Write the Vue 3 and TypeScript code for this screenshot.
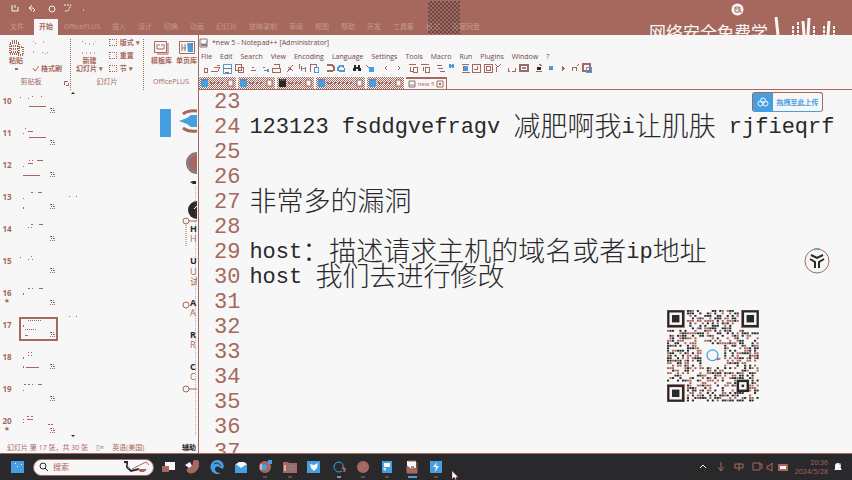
<script setup lang="ts">
interface Segment { text: string; cjk?: boolean }
interface EditorLine { no: number; segs: Segment[] }
interface Shape { d: string; f?: string; s?: string; w?: number }

const RED = '#a6685c'
const BLUE = '#459fe0'
const DARK = '#29292b'
const PALE = '#f7f7f7'

const ribbonTabs = ['文件', '开始', 'OfficePLUS', '插入', '设计', '切换', '动画', '幻灯片', '放映录制', '审阅', '视图', '帮助', '开发', '工具集', '格式', '百度网盘']
const menus = ['File', 'Edit', 'Search', 'View', 'Encoding', 'Language', 'Settings', 'Tools', 'Macro', 'Run', 'Plugins', 'Window', '?']

const content: Record<number, string> = {
  24: '123123 fsddgvefragv 减肥啊我i让肌肤 rjfieqrf',
  27: '非常多的漏洞',
  29: 'host：描述请求主机的域名或者ip地址',
  30: 'host 我们去进行修改',
}
const split = (s: string): Segment[] =>
  (s.match(/[\u3000-\uffff]+|[^\u3000-\uffff]+/g) ?? []).map(text => ({ text, cjk: text.charCodeAt(0) >= 0x3000 }))
const lines: EditorLine[] = Array.from({ length: 15 }, (_, i) => ({ no: 23 + i, segs: split(content[23 + i] ?? '') }))

const slides = [
  { no: 10, d: 'M1 11h1v1h-1zM9 12h1v1h-1zM13 10h1v1h-1zM22 10h1v1h-1z', bar: 'M10 20h17v1h-17z' },
  { no: 11, d: 'M6 10h1v1h-1zM9 13h5v1h-5zM4 15h1v1h-1z', bar: 'M10 19h17v1h-17z' },
  { no: 12, d: 'M10 10h1v1h-1zM13 10h1v1h-1zM18 10h6v1h-6zM4 16h1v1h-1zM9 13h5v1h-5z', bar: 'M4 25h17v1h-17z' },
  { no: 13, d: 'M12 10h2v1h-2zM19 10h4v1h-4zM4 16h1v1h-1zM4 25h1v2h-1z', bar: '' },
  { no: 14, d: 'M12 10h2v1h-2zM20 10h4v1h-4zM9 13h1v1h-1zM12 13h1v1h-1z', bar: '' },
  { no: 15, d: 'M1 11h1v1h-1zM12 10h1v1h-1zM9 13h1v1h-1zM13 13h1v1h-1z', bar: '' },
  { no: 16, d: 'M9 10h2v1h-2zM13 10h1v1h-1zM20 10h4v1h-4zM4 15h1v2h-1z', bar: '', star: true },
  { no: 17, d: 'M9 10h1v1h-1zM11 10h1v1h-1zM13 10h1v1h-1zM15 10h1v1h-1zM17 10h1v1h-1zM19 10h1v1h-1zM21 10h1v1h-1zM4 15h1v2h-1zM6 19h1v1h-1zM8 19h1v1h-1zM10 19h1v1h-1zM12 19h1v1h-1zM14 19h1v1h-1zM16 19h1v1h-1zM6 25h3v1h-3z', bar: '', active: true },
  { no: 18, d: 'M9 10h1v1h-1zM12 10h1v1h-1zM9 13h1v1h-1zM12 13h1v1h-1zM4 15h1v2h-1zM4 24h1v2h-1z', bar: 'M7 25h13v1h-13z' },
  { no: 19, d: 'M5 10h2v1h-2zM9 10h2v1h-2zM13 10h1v1h-1zM19 10h4v1h-4zM4 16h1v1h-1z', bar: '' },
  { no: 20, d: 'M8 10h2v1h-2zM12 10h2v1h-2zM8 13h6v1h-6zM4 13h1v1h-1zM4 16h1v1h-1zM29 18h2v1h-2zM32 18h2v1h-2z', bar: '', star: true },
]

const toolIcons: { at: number; shapes: Shape[] }[] = [
  { at: 205, shapes: [{ d: 'M4 5h3v4h-3z', s: RED }] },
  { at: 215, shapes: [{ d: 'M1 8h7l2-4h-6M7 2h3', s: RED }] },
  { at: 227, shapes: [{ d: 'M1 1h8v9h-8z', s: BLUE }, { d: 'M1 5h8M3 9h4', s: RED }] },
  { at: 239, shapes: [{ d: 'M1 1h6v6h-6zM4 4h5v5h-5z', s: RED }] },
  { at: 253, shapes: [{ d: 'M4 4h2M3 7h5', s: RED }] },
  { at: 265, shapes: [{ d: 'M3 4h2M4 7h4', s: RED }, { d: 'M7 6h2v3h-2z', f: BLUE }] },
  { at: 276, shapes: [{ d: 'M1 5h8v4h-8zM3 1h5v4', s: RED }] },
  { at: 290, shapes: [{ d: 'M2 9l6-7M3 4l5 4', s: RED }] },
  { at: 302, shapes: [{ d: 'M2 1v5M4 3v5M8 4v5', s: RED }, { d: 'M5 5h3', s: BLUE }] },
  { at: 314, shapes: [{ d: 'M1 9v-8h6v3', s: RED }, { d: 'M5 4h4v5h-4z', s: BLUE }] },
  { at: 330, shapes: [{ d: 'M2 2h5l2 2v3l-2 1h-5', s: RED, w: 2 }] },
  { at: 341, shapes: [{ d: 'M8 3h-4l-2 2v2l2 1h5', s: BLUE, w: 2 }, { d: 'M7 3l2 4', s: RED }] },
  { at: 357, shapes: [{ d: 'M2 2h2v2h2v-2h2l1 6h-3v-2h-2v2h-3z', f: DARK }] },
  { at: 370, shapes: [{ d: 'M1 2l3 3', s: RED }, { d: 'M4 4h5v5h-5z', f: BLUE }] },
  { at: 386, shapes: [{ d: 'M6 3l-2 2 2 2', s: RED }] },
  { at: 399, shapes: [{ d: 'M4 3l2 2-2 2', s: RED }] },
  { at: 413, shapes: [{ d: 'M1 1h7M2 4v4h3M5 4h4v5h-4z', s: RED }] },
  { at: 425, shapes: [{ d: 'M1 1h8M3 4v4M5 4h4v5h-4z', s: RED }] },
  { at: 440, shapes: [{ d: 'M2 2h5M3 5h5M5 8h5', s: RED }] },
  { at: 452, shapes: [{ d: 'M3 1v4M6 5v-4M4 3h2', s: BLUE, w: 2 }] },
  { at: 465, shapes: [{ d: 'M2 1h7M3 3v5M2 9h8', s: RED }, { d: 'M4 3h4v5h-4z', f: BLUE }] },
  { at: 476, shapes: [{ d: 'M1 1h8v8h-8zM3 6h3v-3', s: RED }] },
  { at: 488, shapes: [{ d: 'M1 1h8v8h-8zM3 3h4v4h-4z', s: RED }] },
  { at: 498, shapes: [{ d: 'M2 1l3 3 3-3M3 9v-5', s: RED }] },
  { at: 512, shapes: [{ d: 'M1 5v3h2M5 8h3v-3', s: RED }] },
  { at: 524, shapes: [{ d: 'M1 2h8v6h-8z', s: RED, w: 2 }, { d: 'M3 4h4v2h-4z', f: BLUE }] },
  { at: 539, shapes: [{ d: 'M3 4h4v3h-4z', f: DARK }, { d: 'M5 1l3 2M2 8h6', s: RED }] },
  { at: 551, shapes: [{ d: 'M3 3h4v3h-4z', f: BLUE }, { d: 'M3 6h4', s: RED }] },
  { at: 563, shapes: [{ d: 'M4 3l3 2-3 3z', f: RED }] },
  { at: 575, shapes: [{ d: 'M2 8v-4h4v4M7 3l2-2', s: RED }] },
  { at: 587, shapes: [{ d: 'M1 1h7v7h-7z', s: RED, w: 2 }, { d: 'M4 4h5v5h-5z', s: BLUE }] },
]

const docTabs = [
  { c: BLUE, w: 'mid' }, { c: BLUE, w: 'mid' }, { c: DARK, w: 'mid' }, { c: BLUE, w: 'wide' }, { c: BLUE, w: 'mid' },
]

const apps: { name: string; dash?: string; shapes: Shape[] }[] = [
  { name: 'Task view', shapes: [{ d: 'M4 2h10v8h-10z', f: PALE }, { d: 'M1 6h7v6h-7z', f: RED }] },
  { name: 'Copilot', shapes: [{ d: 'M8 1c4-4 7 0 6 5s-6 9-10 7c-3-1-3-4-1-5 3 0 5-2 5-7z', f: RED }, { d: 'M0 5l5-3 2 4-3 2z', f: PALE }] },
  { name: 'Edge', shapes: [{ d: 'M7 0a7 7 0 1 0 4 13c-3 0-6-1-6-4 0-2 2-3 4-2l4 2c2-5-1-9-6-9z', f: BLUE }, { d: 'M4 4c3-2 6 0 7 2', s: DARK }] },
  { name: 'Mail', shapes: [{ d: 'M1 4h12v9h-12z', f: BLUE }, { d: 'M2 4l3-2h5l3 2-6 4z', f: PALE }] },
  { name: 'Chrome', dash: RED, shapes: [{ d: 'M7 1a6 6 0 1 0 .1 0z', f: RED }, { d: 'M6 4a3 3 0 1 0 .1 0z', f: BLUE }, { d: 'M10 0h4v4h-4z', f: BLUE }, { d: 'M3 4v6', s: PALE }] },
  { name: 'Explorer', dash: RED, shapes: [{ d: 'M0 2h5l1 1h8v10h-14z', f: RED }, { d: 'M2 5v6', s: PALE }, { d: 'M6 6h5M6 9h6', s: BLUE }] },
  { name: 'Notes', shapes: [{ d: 'M0 1h13v12h-13z', f: BLUE }, { d: 'M3 4l4 1 4-2-1 5-3 3-3-3z', f: PALE }] },
  { name: 'Quark', dash: PALE, shapes: [{ d: 'M7 2a5 5 0 1 0 3 9M7 2a5 5 0 0 1 4 7', s: BLUE }, { d: 'M10 8l3 1-1 3', s: RED, w: 2 }] },
  { name: 'Media', dash: RED, shapes: [{ d: 'M7 1a6 6 0 1 0 .1 0z', f: RED }, { d: 'M7 5h1v1h-1zM9 5h1v1h-1zM4 7h1v1h-1z', f: BLUE }] },
  { name: 'Store', dash: RED, shapes: [{ d: 'M2 1h10v12h-10z', f: BLUE }, { d: 'M4 3h6v4h-6zM3 8l2 3 1-3z', f: PALE }] },
  { name: 'Notepad++', dash: BLUE, shapes: [{ d: 'M2 1h9v11h-9z', f: PALE }, { d: 'M2 13v-7l4 3 6-1v5zM3 1h8M12 2v6', f: RED, s: RED }, { d: 'M6 7h3', s: DARK }] },
  { name: 'Remote', dash: RED, shapes: [{ d: 'M1 1h12v12h-12z', f: BLUE }, { d: 'M8 2l-4 5h3l-1 5 4-6h-3z', f: PALE }] },
]

const tray: { name: string; shapes: Shape[] }[] = [
  { name: 'More', shapes: [{ d: 'M3 7l3-3 3 3', s: PALE }] },
  { name: 'Sync', shapes: [{ d: 'M6 1v9M3 6l3 4 3-4', s: RED }] },
  { name: 'Input', shapes: [{ d: 'M2 3h8v4h-8zM6 2v8', s: RED }] },
]

const modules: { x: number; y: number; dark: boolean }[] = []
let seed = 77
const rand = () => (seed = (seed * 1103515245 + 12345) % 2147483648) / 2147483648
for (let y = 0; y < 37; y++) {
  for (let x = 0; x < 37; x++) {
    const on = rand() < 0.52
    const dark = rand() < 0.5
    const finder = (x < 8 && y < 8) || (x > 28 && y < 8) || (x < 8 && y > 28)
    const align = x > 27 && x < 33 && y > 27 && y < 33
    const centre = x > 13 && x < 23 && y > 13 && y < 23
    if (on && !finder && !align && !centre) modules.push({ x, y, dark })
  }
}
</script>

<template>
  <div class="screen">
    <header class="ppt-head">
      <div class="quick">
        <svg viewBox="0 0 90 18" width="90" height="18" fill="none" stroke="#f7f7f7">
          <path d="M12 5v6h6V7M15 5v3M30 8h3l2 2-2 2M32 5l-3 3 3 3" />
          <circle cx="52" cy="9" r="3" />
          <path d="M64 5h7l-3 6h-3" stroke-dasharray="2 1" />
          <path d="M83 10h1" />
        </svg>
      </div>
      <nav class="ribbon-tabs">
        <button v-for="(t, i) in ribbonTabs" :key="t" :class="{ active: i === 1 }">{{ t }}</button>
      </nav>
      <div class="shade"></div>
      <div class="avatar"><svg viewBox="0 0 13 13" width="13" height="13"><circle cx="6.5" cy="6.5" r="6" fill="#f7f7f7" /><path d="M4 4h4v5h-4zM4 6h3M9 4v5h2" fill="none" stroke="#a6685c" /></svg></div>
      <div class="watermark">
        <span>网络安全免费学</span>
        <svg viewBox="0 0 64 20" width="64" height="20" fill="none" stroke="#f7f7f7" stroke-width="3">
          <path d="M4 0l2 18M31 4l1 14M37 1l-1 17M57 4l-1 14" />
          <path d="M21 9v9M26 5v13M52 9v9M62 9v9M42 9v9" stroke-width="2" stroke-dasharray="3 1" />
        </svg>
      </div>
    </header>

    <main class="desk">
      <section class="ppt">
        <div class="ribbon">
          <div class="group clip">
            <div class="tools">
              <button class="big">
                <svg viewBox="0 0 16 18" width="16" height="18" fill="none" stroke="#a6685c" stroke-width="2" stroke-dasharray="1 1"><path d="M2 4h9v11h-9zM4 2h5M3 7h8M3 10h8M3 13h8M11 8h4v8h-5" /></svg>
                <span>粘贴</span><i class="caret"></i>
              </button>
              <div class="stack">
                <svg viewBox="0 0 20 18" width="20" height="18" fill="none" stroke="#a6685c" stroke-dasharray="1 2"><path d="M1 2l3 3M11 3h2M1 13h3M10 13l3 2 4-2" /></svg>
                <button class="brush"><svg viewBox="0 0 7 7" width="7" height="7"><path d="M1 3l2 3 4-5" fill="none" stroke="#a6685c" /></svg>格式刷</button>
              </div>
            </div>
            <h2>剪贴板</h2>
            <svg class="launcher" viewBox="0 0 5 5" width="5" height="5"><path d="M0 .5h4M.5 0v4M2 4.500h3M4.500 2v3" stroke="#a6685c" /></svg>
          </div>
          <div class="group pages">
            <div class="tools">
              <button class="big">
                <svg viewBox="0 0 16 18" width="16" height="18" fill="none" stroke="#a6685c" stroke-dasharray="1 3"><path d="M1 2l4 3h8l2-3M1 14h14" /></svg>
                <span>新建</span><span>幻灯片 ▾</span>
              </button>
              <div class="stack three">
                <button><i></i>版式 ▾</button><button><i></i>重置</button><button><i></i>节 ▾</button>
              </div>
            </div>
            <h2>幻灯片</h2>
          </div>
          <div class="group plus">
            <div class="tools">
              <button class="big"><svg viewBox="0 0 16 18" width="16" height="18" fill="none" stroke="#a6685c"><path d="M.5 2.5h12v11h-12zM3 5v5h7V5M5 5v2M8 5v2M14 4v11H3" /></svg><span>模板库</span></button>
              <button class="big"><svg viewBox="0 0 16 18" width="16" height="18" fill="none" stroke="#a6685c"><path d="M.5 2.5h15v12h-15z" /><path d="M8 4h6v9H9z" fill="#459fe0" stroke="none" /><path d="M3 5v7M6 5v7M3 9h4M13 4v4" /></svg><span>单页库</span></button>
            </div>
            <h2>OfficePLUS</h2>
          </div>
        </div>

        <div class="work">
          <ol class="thumbs">
            <li v-for="s in slides" :key="s.no" :class="{ active: s.active }">
              <span class="num">{{ s.no }}<b v-if="s.star">★</b></span>
              <svg viewBox="0 0 39 32" width="39" height="32" shape-rendering="crispEdges" fill="#a6685c">
                <path :d="s.d" /><path :d="s.bar" />
                <path d="M31 22h2v1h-2zM34 22h1v1h-1zM32 24h1v1h-1zM34 24h2v1h-2zM31 26h1v1h-1zM33 26h1v1h-1zM35 26h1v1h-1z" />
                <rect v-if="s.active" x="1" y="8" width="37" height="22" fill="none" stroke="#a6685c" stroke-width="2" />
              </svg>
            </li>
          </ol>
          <svg class="slide" viewBox="0 0 138 350" width="138" height="350">
            <g fill="#29292b"><path d="M12 4l2-2 2 2zM12 345h4l-2 2z" /></g>
            <g fill="#a6685c"><path d="M10 106h1v1h-1zM17 106h1v1h-1zM10 226h1v1h-1zM17 226h1v1h-1z" /></g>
            <path d="M101 19h11v28h-11z" fill="#459fe0" />
            <path d="M120 31l8-3 4-3h6v12h-6l-4-3z" fill="#459fe0" />
            <path d="M124 24q5-4 14-3M124 38q5 4 14 3" fill="none" stroke="#a6685c" stroke-width="3" />
            <circle cx="138" cy="73" r="11" fill="#a6685c" />
            <circle cx="138" cy="73" r="9" fill="none" stroke="#459fe0" stroke-dasharray="1 1" stroke-width="2" />
            <path d="M131 92l3-1h3v3h-3z" fill="#29292b" />
            <ellipse cx="138" cy="120" rx="9" ry="9" fill="#29292b" />
            <path d="M135 119l3-3" stroke="#f7f7f7" />
            <g fill="none" stroke="#a6685c"><circle cx="127" cy="131" r="3" /><circle cx="127" cy="215" r="3" /><circle cx="127" cy="299" r="3" /><path d="M130 131h8M130 299h8" /><path d="M127 135v22" stroke-dasharray="1 1" /><path d="M136.500 96v250" stroke-dasharray="1 1" opacity=".5" /></g>
            <g class="bold" fill="#29292b"><text x="131" y="142">H</text><text x="131" y="174">U</text><text x="131" y="216">A</text><text x="131" y="248">R</text><text x="131" y="280">C</text></g>
            <g class="reg" fill="#a6685c"><text x="131" y="152">H</text><text x="131" y="185">U</text><text x="131" y="195">试</text><text x="131" y="226">A</text><text x="131" y="258">R</text><text x="131" y="290">C</text></g>
          </svg>
        </div>
        <footer class="ppt-status"><span>幻灯片 第 17 张，共 30 张</span><span>▯×</span><span>英语(美国)</span><b>辅助</b></footer>
      </section>

      <section class="npp">
        <div class="title">
          <svg viewBox="0 0 10 10" width="10" height="10" fill="none"><path d="M1 1h7v8h-7z" stroke="#a6685c" /><path d="M2 5l3 2 4-4" stroke="#459fe0" /><path d="M2 7h6" stroke="#29292b" /></svg>
          <span>*new 5 - Notepad++ [Administrator]</span>
        </div>
        <nav class="menu"><button v-for="m in menus" :key="m">{{ m }}</button></nav>
        <svg class="toolbar" viewBox="199 0 394 11" width="394" height="11" shape-rendering="crispEdges">
          <g v-for="t in toolIcons" :key="t.at" :transform="`translate(${t.at - 5} 0)`">
            <path v-for="(p, i) in t.shapes" :key="i" :d="p.d" :fill="p.f ?? 'none'" :stroke="p.s ?? 'none'" :stroke-width="p.w ?? 1" />
          </g>
        </svg>
        <div class="doc-tabs">
          <button v-for="(t, i) in docTabs" :key="i" :class="t.w" :aria-label="`new ${i}`">
            <svg viewBox="0 0 8 8" width="8" height="8"><path d="M0 0h7v8h-7z" :fill="t.c" /><path d="M1 1h5" stroke="#a6685c" /></svg>
            <i class="dash"></i>
            <svg viewBox="0 0 7 8" width="7" height="8"><path d="M1 1h5v6h-5z" fill="#f7f7f7" stroke="#a6685c" /></svg>
          </button>
          <button class="current">
            <svg viewBox="0 0 8 8" width="8" height="8"><path d="M1 1h6v6h-6z" fill="none" stroke="#a6685c" /><path d="M1 5h6" stroke="#459fe0" /></svg>
            <span>new 5</span>
            <svg viewBox="0 0 8 8" width="8" height="8"><path d="M1 1h6v6h-6zM3 3l2 2M5 3l-2 2" fill="none" stroke="#a6685c" /></svg>
          </button>
        </div>
        <div class="editor">
          <div v-for="l in lines" :key="l.no" class="line">
            <span class="ln">{{ l.no }}</span>
            <code><span v-for="(s, i) in l.segs" :key="i" :class="{ cjk: s.cjk }">{{ s.text }}</span></code>
          </div>
          <button class="upload">
            <span class="cloud"><svg viewBox="0 0 12 10" width="12" height="10" fill="none" stroke="#f7f7f7"><circle cx="6" cy="3.5" r="2.5" /><circle cx="3.5" cy="6.5" r="2.5" /><circle cx="8.5" cy="6.5" r="2.5" /></svg></span>
            <span class="label">拖拽至此上传</span>
          </button>
          <svg class="yoke" viewBox="0 0 26 26" width="26" height="26" fill="none"><circle cx="13" cy="13" r="12" stroke="#a6685c" /><path d="M10 1q3-1 6 0" stroke="#459fe0" /><path d="M7 7l6 3 6-3M6 11l5 3v6M20 11l-5 3v6" stroke="#29292b" stroke-width="2" /></svg>
          <svg class="qr" viewBox="0 0 37 37" width="92" height="92">
            <rect v-for="(m, i) in modules" :key="i" :x="m.x" :y="m.y" width=".85" height=".75" :fill="m.dark ? '#29292b' : '#a6685c'" />
            <g v-for="(p, i) in [[0, 0], [30, 0], [0, 30]]" :key="i" :transform="`translate(${p[0]} ${p[1]})`">
              <rect x=".5" y=".5" width="6" height="6" fill="none" stroke="#29292b" />
              <rect x="0" y="0" width="7" height="7" fill="none" stroke="#a6685c" stroke-width=".3" />
              <rect x="2" y="2" width="3" height="3" fill="#29292b" />
            </g>
            <rect x="28.5" y="28.5" width="4" height="4" fill="none" stroke="#29292b" /><rect x="30" y="30" width="1" height="1" fill="#29292b" />
            <circle cx="18.3" cy="18.2" r="2.2" fill="none" stroke="#459fe0" stroke-width=".5" /><path d="M20 20l1.500-.5" stroke="#a6685c" stroke-width=".6" />
          </svg>
        </div>
      </section>
    </main>

    <footer class="taskbar">
      <button class="start" aria-label="Start"><svg viewBox="0 0 14 14" width="14" height="14"><path d="M0 1h13v12h-13z" fill="#459fe0" /><path d="M4 3h1v1h-1zM6 6h1v1h-1zM10 4h1v1h-1z" fill="#f7f7f7" /></svg></button>
      <label class="search">
        <svg viewBox="0 0 10 10" width="10" height="10" fill="none" stroke="#29292b"><circle cx="4" cy="4" r="3" /><path d="M6 6l3 3" /></svg>
        <input type="search" placeholder="搜索" aria-label="搜索" />
        <svg viewBox="0 0 28 14" width="28" height="14" fill="none"><path d="M1 2h3v5l4 4 8-2" stroke="#29292b" stroke-width="2" /><path d="M9 9l14-7 3 3M3 3l3 6" stroke="#a6685c" /><path d="M15 9h9l-3 3h-4z" fill="#a6685c" /></svg>
      </label>
      <div class="apps">
        <button v-for="a in apps" :key="a.name" :aria-label="a.name">
          <svg viewBox="0 0 14 19" width="14" height="19">
            <path v-for="(p, i) in a.shapes" :key="i" :d="p.d" :fill="p.f ?? 'none'" :stroke="p.s ?? 'none'" :stroke-width="p.w ?? 1" />
            <path v-if="a.dash" :d="a.name === 'Notepad++' ? 'M3 17h9' : 'M5 17h4'" :stroke="a.dash" :stroke-width="a.name === 'Notepad++' ? 2 : 1" />
          </svg>
        </button>
      </div>
      <div class="tray">
        <button v-for="t in tray" :key="t.name" :aria-label="t.name">
          <svg viewBox="0 0 12 12" width="12" height="12"><path v-for="(p, i) in t.shapes" :key="i" :d="p.d" fill="none" :stroke="p.s" :stroke-width="p.w ?? 1" /></svg>
        </button>
        <button aria-label="Status">
          <svg viewBox="0 0 38 12" width="38" height="12" fill="none" stroke="#a6685c"><path d="M2 2h7v7h-7z" /><path d="M8 3h3v5M16 5h2l3-3v8l-3-2h-2z" /><path d="M28 4h8v5h-8z" fill="#f7f7f7" stroke-width="2" /></svg>
        </button>
        <time>20:36<br />2024/5/28</time>
        <button aria-label="Notifications"><svg viewBox="0 0 8 10" width="8" height="10"><path d="M1 7V4q0-3 3-3t3 3v3l1 1H0zM3 9h2" fill="#f7f7f7" /><path d="M5 2h2M6 5h1" stroke="#459fe0" /></svg></button>
      </div>
    </footer>
    <svg class="cursor" viewBox="0 0 6 9" width="6" height="9"><path d="M0 0v8l2-2 2 3V6h2z" fill="#f7f7f7" stroke="#a6685c" stroke-width=".6" /></svg>
  </div>
</template>

<style>
body { background: #f7f7f7; overflow: hidden; }
</style>

<style scoped>
.screen { --red: #a6685c; --blue: #459fe0; --dark: #29292b; --pale: #f7f7f7; position: relative; display: flex; flex-direction: column; height: 100vh; overflow: hidden; background: var(--pale); color: var(--red); font: 7px/8px "Open Sans", "Noto Sans CJK SC", sans-serif; }
* { box-sizing: border-box; }
button { margin: 0; padding: 0; border: 0; background: none; color: inherit; font: inherit; white-space: nowrap; }
svg { flex: none; display: block; }
h2 { margin: 0; font: inherit; text-align: center; }

.ppt-head { position: relative; display: grid; grid-template-rows: 19px 16px; flex: none; background: var(--red); }
.ribbon-tabs { display: flex; gap: 0; }
.ribbon-tabs button { padding: 0 6px; color: rgba(247, 247, 247, .35); }
.ribbon-tabs button:first-child { padding: 0 10px; }
.ribbon-tabs button.active { padding: 0 5px; background: var(--pale); color: var(--red); font-weight: 700; }
.shade { position: absolute; left: 428px; top: 1px; width: 32px; height: 33px; background: repeating-conic-gradient(#29292b 0 25%, transparent 0 50%) 0 0 / 4px 4px; opacity: .5; }
.avatar { position: absolute; right: 108px; top: 3px; }
.watermark { position: absolute; z-index: 1; right: 16px; top: 17px; height: 18px; overflow: hidden; display: flex; gap: 4px; color: var(--pale); font-size: 17px; line-height: 32px; }

.desk { flex: 1; min-height: 0; display: grid; grid-template-columns: 198px minmax(0, 1fr); }
.ppt { display: flex; flex-direction: column; min-width: 0; min-height: 0; overflow: hidden; }
.ribbon { display: grid; grid-template-columns: 71px 73px 54px; flex: none; height: 55px; padding-top: 4px; }
.group { display: flex; flex-direction: column; justify-content: space-between; padding-bottom: 4px; border-right: 1px dotted var(--red); min-width: 0; }
.group:last-child { border: 0; }
.tools { display: flex; gap: 8px; padding-left: 8px; }
.plus .tools { padding-left: 7px; gap: 4px; }
.pages .tools { padding-left: 5px; gap: 6px; }
.clip { position: relative; }
.clip h2 { padding-right: 8px; }
.launcher { position: absolute; right: 1px; bottom: 4px; }
.big { display: flex; flex-direction: column; align-items: center; }
.big span { font-weight: 700; }
.caret { width: 3px; height: 2px; margin-top: 3px; background: var(--red); }
.stack { display: flex; flex-direction: column; gap: 5px; }
.clip .stack { gap: 4px; }
.brush { display: flex; gap: 2px; padding-top: 4px; font-weight: 700; }
.stack.three { align-items: flex-start; font-weight: 700; }
.three button { display: flex; gap: 3px; font-weight: inherit; }
.three i { width: 8px; height: 7px; border: 1px dotted var(--red); }

.work { flex: 1; min-height: 0; display: grid; grid-template-columns: 59px 1fr; overflow: hidden; }
.thumbs { margin: 0; padding: 4px 0 0; list-style: none; }
.thumbs li { display: grid; grid-template-columns: 19px 39px; height: 32px; }
.num { display: flex; flex-direction: column; align-items: center; width: 14px; padding-top: 2px; font: 700 8px/9px "Open Sans", sans-serif; }
.num b { font: 7px/8px "DejaVu Sans", sans-serif; }
.thumbs svg { margin-top: -8px; }
.slide text { font-family: "Open Sans", "Noto Sans CJK SC", sans-serif; font-size: 9px; }
.bold text { font-weight: 700; }
.ppt-status { display: flex; gap: 8px; flex: none; height: 12px; padding-left: 7px; line-height: 13px; white-space: nowrap; overflow: hidden; }
.ppt-status b { margin-left: auto; padding-right: 2px; color: var(--dark); }

.npp { display: flex; flex-direction: column; min-width: 0; min-height: 0; border-left: 1px solid var(--red); background: var(--pale); }
.title { display: flex; align-items: center; gap: 3px; height: 15px; color: #6b4a44; white-space: pre; }
.menu { display: flex; gap: 8px; height: 13px; padding: 2px; color: #6b4a44; }
.doc-tabs { display: flex; gap: 2px; height: 16px; padding-top: 3px; border-bottom: 1px solid var(--red); }
.doc-tabs button { display: flex; align-items: center; justify-content: space-between; width: 37px; padding: 0 2px; background: repeating-conic-gradient(#a6685c 0 25%, #f7f7f7 0 50%) 0 0 / 2px 2px; }
.doc-tabs .wide { width: 49px; }
.dash { flex: 1; margin: 0 4px 0 1px; border-top: 2px dotted var(--red); }
.doc-tabs .current { width: 41px; border-top: 2px solid var(--red); border-right: 1px solid var(--red); background: var(--pale); font-size: 6px; }

.editor { position: relative; flex: 1; min-height: 0; overflow: hidden; color: var(--dark); font: 22px/25px "Liberation Mono", "Noto Sans CJK SC", monospace; }
.line { display: flex; gap: 9px; height: 25px; padding-left: 15px; white-space: pre; }
.ln { color: var(--red); }
code { display: flex; font: inherit; }
.cjk { height: 25px; font-family: "Noto Sans CJK SC", sans-serif; font-size: 27px; font-weight: 300; line-height: 19px; }
.upload { position: absolute; right: 29px; top: 2px; display: flex; width: 71px; height: 20px; border: 1px solid var(--red); border-bottom-color: var(--blue); border-radius: 3px; background: var(--pale); color: var(--blue); font: 700 7px/18px "Noto Sans CJK SC", sans-serif; }
.cloud { display: grid; place-items: center; width: 20px; background: var(--blue); }
.label { flex: 1; text-align: center; }
.yoke { position: absolute; right: 22px; top: 158px; }
.qr { position: absolute; right: 93px; top: 220px; }

.taskbar { display: flex; align-items: center; flex: none; height: 27px; padding: 0 10px 0 11px; border-top: 1px solid var(--red); background: var(--dark); }
.search { display: flex; align-items: center; gap: 4px; width: 121px; height: 17px; margin-left: 8px; padding: 0 2px 0 5px; border: 1px solid var(--red); border-radius: 9px; background: var(--pale); }
.search input { flex: 1; min-width: 0; padding: 0; border: 0; outline: 0; background: none; color: var(--red); font: 8px/12px "Noto Sans CJK SC", sans-serif; }
.search input::placeholder { color: var(--red); opacity: 1; }
.apps { display: flex; justify-content: space-between; width: 282px; margin-left: 7px; padding-top: 5px; }
.tray { display: flex; align-items: center; gap: 6px; margin-left: auto; }
.tray time { font: 7px/9px "Open Sans", sans-serif; text-align: right; }
.cursor { position: absolute; left: 452px; bottom: 0; }
</style>
